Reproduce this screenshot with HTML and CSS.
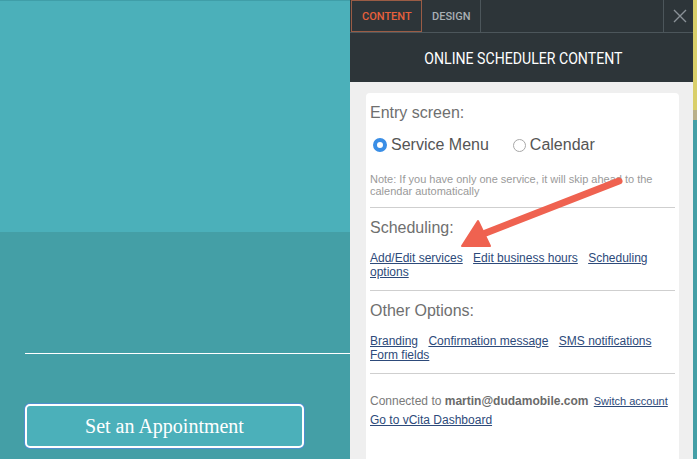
FILE: index.html
```html
<!DOCTYPE html>
<html>
<head>
<meta charset="utf-8">
<link rel="stylesheet" href="styles.css">
</head>
<body>
<div class="page">
  <div class="site">
    <div class="site-top"></div>
    <div class="site-bottom">
      <div class="rule"></div>
      <button class="appt">Set an Appointment</button>
    </div>
  </div>
  <div class="panel">
    <div class="tabs">
      <div class="tab active">CONTENT</div>
      <div class="tab">DESIGN</div>
      <div class="tab-fill"></div>
      <div class="close">
        <svg width="14" height="14" viewBox="0 0 14 14"><path d="M1 1L13 13M13 1L1 13" stroke="#8a9297" stroke-width="1.4"/></svg>
      </div>
    </div>
    <div class="title"><span class="title-text">ONLINE SCHEDULER CONTENT</span></div>
    <div class="body">
      <div class="card">
        <div class="heading">Entry screen:</div>
        <div class="radios">
          <span class="radio"><span class="dot on"></span>Service Menu</span>
          <span class="radio"><span class="dot"></span>Calendar</span>
        </div>
        <div class="note">Note: If you have only one service, it will skip ahead to the calendar automatically</div>
        <hr class="sep">
        <div class="heading">Scheduling:</div>
        <div class="links"><a>Add/Edit services</a> <a>Edit business hours</a> <a><span>Scheduling</span> <span>options</span></a></div>
        <hr class="sep">
        <div class="heading">Other Options:</div>
        <div class="links"><a>Branding</a> <a>Confirmation message</a> <a>SMS notifications</a> <a>Form fields</a></div>
        <hr class="sep">
        <div class="connected">Connected to <b>martin@dudamobile.com</b> <a class="small">Switch account</a></div>
        <div class="dash"><a>Go to vCita Dashboard</a></div>
      </div>
    </div>
  </div>
  <div class="edge">
    <div class="edge-top"></div>
    <div class="edge-mid"></div>
    <div class="edge-bot"></div>
  </div>
  <svg class="arrow" width="697" height="459" viewBox="0 0 697 459">
    <line x1="619" y1="181" x2="478" y2="236" stroke="#ef6250" stroke-width="7" stroke-linecap="round"/>
    <polygon points="462,246 478,221 490,246" fill="#ef6250" stroke="#ef6250" stroke-width="2" stroke-linejoin="round"/>
  </svg>
</div>
</body>
</html>
```

FILE: styles.css
```css
* { box-sizing: border-box; }
html, body { margin: 0; padding: 0; }
body { width: 697px; height: 459px; overflow: hidden; font-family: "Liberation Sans", Arial, sans-serif; }
.page { position: relative; display: flex; width: 697px; height: 459px; }

.site { width: 350px; display: flex; flex-direction: column; }
.site-top { height: 232px; background: #4bb0ba; border-top: 1px solid #3f9ea8; }
.site-bottom { flex: 1; background: #449fa6; padding: 121px 0 0 25px; display: flex; flex-direction: column; }
.rule { height: 1px; background: #ffffff; }
.appt {
  margin-top: 50px; width: 279px; height: 44px; background: #4bb0ba;
  border: 2px solid #ffffff; border-radius: 5px; box-shadow: 0 0 0 1px #4f8fcf;
  color: #ffffff; font-family: "Liberation Serif", "DejaVu Serif", serif; font-size: 20px;
  padding: 0; text-align: center;
}

.panel { width: 343px; display: flex; flex-direction: column; background: #2d3539; }
.tabs { height: 33px; display: flex; border-bottom: 1px solid #4c565b; }
.tab { font-family: Roboto, "Liberation Sans", sans-serif; font-weight: 500; font-size: 11px; color: #a9b0b4;
  display: flex; align-items: center; padding: 0 10px; border-right: 1px solid #4c565b; }
.tab.active { color: #e8603c; border: 1px solid #9a5c45; margin-left: 1px; padding: 0 10px; width: 71px; }
.tab-fill { flex: 1; border-right: 1px solid #4c565b; }
.close { width: 29px; display: flex; align-items: center; justify-content: center; padding-left: 2px; }
.title { height: 49px; display: flex; align-items: center; justify-content: center; color: #ffffff; }
.title-text { display: inline-block; font-family: Roboto, "Liberation Sans", sans-serif; font-size: 17px;
  transform: scaleX(0.83); white-space: nowrap; margin-left: 4px; }
.body { flex: 1; background: #efefef; padding: 11px 14px 0 16px; }
.card { background: #ffffff; height: 100%; border-radius: 4px 4px 0 0; padding: 10px 4px 0 4px; }
.heading { font-size: 16px; line-height: 20px; color: #6f6f6f; }
.radios { margin-top: 12px; height: 20px; display: flex; align-items: center; font-size: 16px; color: #555555; }
.radio { display: flex; align-items: center; margin-right: 24px; }
.dot { width: 13px; height: 13px; border-radius: 50%; border: 1px solid #a8a8a8; margin: 0 4px 0 3px; background: #fff; }
.dot.on { border: 4px solid #3a8ee6; background: #ffffff; width: 14px; height: 14px; }
.radio:nth-child(2) .dot { margin-left: 0; }
.note { margin-top: 18px; font-size: 11px; line-height: 12px; color: #9a9a9a; }
.sep { border: 0; border-top: 1px solid #cfcfcf; margin: 10px 0 10px 0; }
.links { margin-top: 13px; font-size: 12px; line-height: 14px; }
.links a { color: #2d4a7a; text-decoration: underline; margin-right: 7px; }
.links + .sep { margin-top: 11px; }
.connected { margin-top: 20px; font-size: 12px; line-height: 14px; color: #7a7a7a; }
.connected b { color: #6a6a6a; }
.connected a, .dash a { color: #2d4a7a; text-decoration: underline; }
.small { font-size: 11px; margin-left: 2px; }
.dash { margin-top: 5px; font-size: 12px; line-height: 14px; }

.edge { width: 4px; display: flex; flex-direction: column; }
.edge-top { height: 110px; background: #d9cf6a; }
.edge-mid { height: 10px; background: #b9b08a; }
.edge-bot { flex: 1; background: #449fa6; }

.arrow { position: absolute; left: 0; top: 0; pointer-events: none; }
```
